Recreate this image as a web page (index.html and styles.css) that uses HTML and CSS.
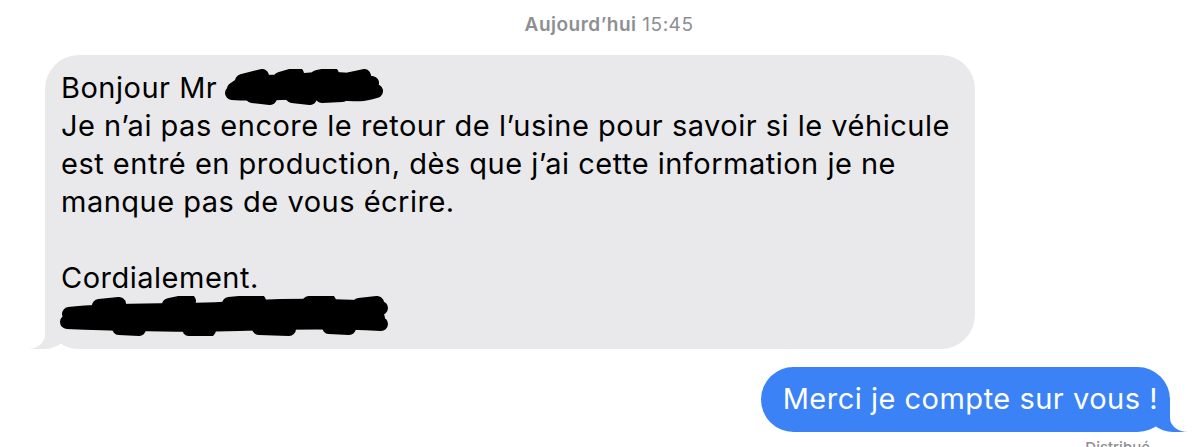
FILE: index.html
```html
<!DOCTYPE html>
<html lang="fr">

<head>
    <meta charset="UTF-8">
    <meta name="viewport" content="width=device-width, initial-scale=1.0">
    <title>Messages</title>
    <link rel="stylesheet" href="styles.css">
</head>

<body>
    <div class="thread">
        <div class="stamp"><b>Aujourd’hui</b> 15:45</div>

        <div class="row incoming">
            <div class="bubble grey">
                <p class="text">Bonjour Mr <svg class="blot blot-name" viewBox="0 0 164 36" aria-hidden="true">
                        <rect x="8" y="10" width="148" height="18" rx="9" />
                        <path d="M12 20 C 30 10, 50 14, 70 12 S 120 8, 150 14" />
                        <path d="M10 24 C 40 26, 80 22, 110 24 S 140 26, 154 22" />
                        <path d="M20 12 L 40 7 M58 10 L 75 5 M95 8 L 110 5 M128 10 L 142 7" />
                        <path d="M30 27 L 48 29 M70 27 L 88 29 M100 27 L 120 26" />
                    </svg><br>
                    Je n’ai pas encore le retour de l’usine pour savoir si le véhicule est entré en production, dès que j’ai cette information je ne manque pas de vous écrire.<br>
                    <br>
                    Cordialement.<br>
                    <svg class="blot blot-sign" viewBox="0 0 332 40" aria-hidden="true">
                        <rect x="6" y="12" width="320" height="20" rx="10" />
                        <path d="M10 18 C 60 12, 120 16, 180 12 S 280 10, 322 12" />
                        <path d="M8 26 C 60 28, 120 30, 180 28 S 280 26, 322 28" />
                        <path d="M40 10 L 60 8 M110 9 L 130 5 M170 8 L 200 5 M250 7 L 270 5 M300 9 L 318 7" />
                        <path d="M60 32 L 80 33 M130 33 L 150 34 M200 32 L 230 33 M270 31 L 290 32" />
                    </svg>
                </p>
            </div>
        </div>

        <div class="row outgoing">
            <div class="bubble blue">
                <p class="text">Merci je compte sur vous !</p>
            </div>
        </div>

        <div class="status">Distribué</div>
    </div>
</body>

</html>
```

FILE: styles.css
```css
body {
    margin: 0;
    padding: 0;
    background-color: #fff;
    font-family: Inter, "Noto Sans", sans-serif;
    overflow: hidden;
}

.thread {
    display: flex;
    flex-direction: column;
    padding: 12px 0 0;
}

.stamp {
    text-align: center;
    font-size: 19px;
    letter-spacing: 0.5px;
    color: #8e8e93;
    margin-left: 18px;
    line-height: 26px;
}

.stamp b {
    font-weight: 600;
}

.row {
    display: flex;
}

.incoming {
    padding-left: 45px;
    margin-top: 17px;
}

.outgoing {
    justify-content: flex-end;
    padding-right: 30px;
    margin-top: 18px;
}

.bubble {
    position: relative;
    border-radius: 34px;
}

.text {
    position: relative;
    z-index: 2;
    margin: 0;
}

.grey {
    width: 930px;
    box-sizing: border-box;
    background-color: #e9e9eb;
    color: #000;
    padding: 14px 20px 13px 16px;
    font-size: 29px;
    letter-spacing: 0.5px;
    line-height: 38px;
}

.blue {
    background-color: #3a82f6;
    color: #fff;
    padding: 13px 12px 14px 22px;
    font-size: 29px;
    letter-spacing: 0.5px;
    line-height: 38px;
}

/* tails */
.bubble::before,
.bubble::after {
    content: "";
    position: absolute;
    bottom: 0;
    height: 34px;
}

.grey::before {
    left: -15px;
    width: 40px;
    background-color: #e9e9eb;
    border-bottom-right-radius: 26px 22px;
    z-index: 0;
}

.grey::after {
    left: -26px;
    width: 26px;
    background-color: #fff;
    border-bottom-right-radius: 18px 14px;
    z-index: 1;
}

.blue::before {
    right: -17px;
    width: 40px;
    background-color: #3a82f6;
    border-bottom-left-radius: 26px 22px;
    z-index: 0;
}

.blue::after {
    right: -28px;
    width: 28px;
    background-color: #fff;
    border-bottom-left-radius: 18px 14px;
    z-index: 1;
}

/* redacted scribbles */
.blot {
    display: inline-block;
    vertical-align: middle;
    stroke: #000;
    stroke-width: 14;
    stroke-linecap: round;
    stroke-linejoin: round;
}

.blot path {
    fill: none;
}

.blot rect {
    fill: #000;
    stroke: none;
}

.blot-name {
    width: 164px;
    height: 36px;
    margin-left: -4px;
    margin-top: -6px;
}

.blot-sign {
    width: 332px;
    height: 40px;
    margin-left: -2px;
    margin-top: -4px;
}

.status {
    align-self: flex-end;
    margin: 6px 50px 0 0;
    font-size: 15px;
    color: #8e8e93;
    font-weight: 500;
}
```
